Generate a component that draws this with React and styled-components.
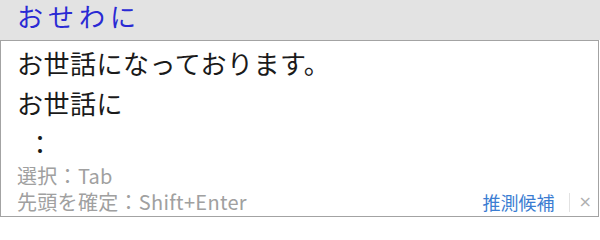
import React from "react";
import styled, { createGlobalStyle } from "styled-components";

const GlobalStyle = createGlobalStyle`
  body {
    margin: 0;
    background: #ffffff;
    font-family: "Noto Sans CJK JP", "Noto Sans", sans-serif;
  }
`;

const Header = styled.div`
  height: 40px;
  box-sizing: border-box;
  background: #e3e3e3;
  padding: 0 0 8px 17px;
  font-size: 26px;
  line-height: 32px;
  letter-spacing: 5px;
  color: #2a2ad4;
`;

const Panel = styled.div`
  height: 177px;
  box-sizing: border-box;
  margin-right: 1px;
  border: 1px solid #a3a3a3;
  padding: 2px 6px 0 16px;
  background: #ffffff;
`;

const Line = styled.div`
  font-size: 26px;
  line-height: 40px;
  letter-spacing: 0.5px;
  color: #1a1a1a;
  white-space: nowrap;
  padding-left: ${({ $indent }) => $indent || 0}px;
`;

const Hint = styled.div`
  font-size: 20px;
  line-height: 26px;
  letter-spacing: 0.3px;
  color: #a0a0a0;
  white-space: nowrap;
`;

const FootRow = styled.div`
  display: flex;
  align-items: center;
  justify-content: space-between;
`;

const Actions = styled.div`
  display: flex;
  align-items: center;
`;

const Suggest = styled.span`
  font-size: 18px;
  line-height: 26px;
  color: #3b7dd2;
`;

const Divider = styled.span`
  width: 1px;
  height: 19px;
  background: #e2e2e2;
  margin: 0 9px 0 14px;
`;

const Close = styled.span`
  font-size: 16px;
  line-height: 26px;
  color: #b0b0b0;
  font-family: "DejaVu Sans", sans-serif;
`;

export default function App() {
  return (
    <>
      <GlobalStyle />
      <Header>おせわに</Header>
      <Panel>
        <Line>お世話になっております。</Line>
        <Line>お世話に</Line>
        <Line $indent={10}>：</Line>
        <Hint>選択：Tab</Hint>
        <FootRow>
          <Hint>先頭を確定：Shift+Enter</Hint>
          <Actions>
            <Suggest>推測候補</Suggest>
            <Divider />
            <Close>×</Close>
          </Actions>
        </FootRow>
      </Panel>
    </>
  );
}
